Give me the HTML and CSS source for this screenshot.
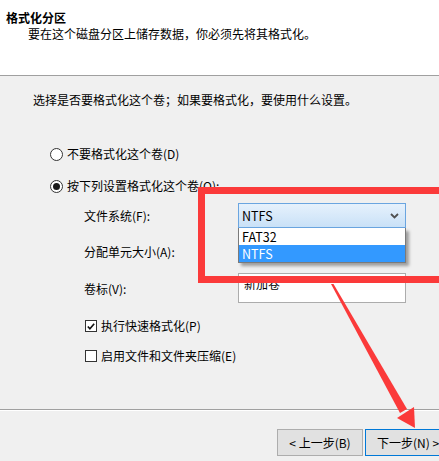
FILE: index.html
```html
<!DOCTYPE html>
<html lang="zh-CN">
<head>
<meta charset="utf-8">
<title>格式化分区</title>
<link rel="stylesheet" href="styles.css">
</head>
<body>
<div class="wizard">
  <header class="head">
    <div class="head-title">格式化分区</div>
    <div class="head-sub">要在这个磁盘分区上储存数据，你必须先将其格式化。</div>
  </header>

  <main class="content">
    <p class="intro">选择是否要格式化这个卷；如果要格式化，要使用什么设置。</p>

    <div class="options">
      <label class="radio-row r1"><span class="radio"></span>不要格式化这个卷(D)</label>
      <label class="radio-row r2"><span class="radio checked"></span>按下列设置格式化这个卷(O):</label>

      <div class="fields">
        <div class="field f1">
          <span class="field-label">文件系统(F):</span>
          <div class="combo open">
            <span class="combo-value">NTFS</span>
            <svg class="chev" width="9" height="6" viewBox="0 0 9 6"><path d="M1 1 L4.5 4.5 L8 1" fill="none" stroke="#505050" stroke-width="1.8"/></svg>
            <ul class="combo-list">
              <li>FAT32</li>
              <li class="sel">NTFS</li>
            </ul>
          </div>
        </div>
        <div class="field f2">
          <span class="field-label">分配单元大小(A):</span>
        </div>
        <div class="field f3">
          <span class="field-label">卷标(V):</span>
          <div class="textbox">新加卷</div>
        </div>
      </div>

      <label class="check-row c1"><span class="check on"><svg width="11" height="11" viewBox="0 0 11 11"><path d="M2 5.5 L4.3 8 L9 2.5" fill="none" stroke="#111" stroke-width="1.8"/></svg></span>执行快速格式化(P)</label>
      <label class="check-row c2"><span class="check"></span>启用文件和文件夹压缩(E)</label>
    </div>
  </main>

  <footer class="foot">
    <button class="btn">&lt; 上一步(B)</button>
    <button class="btn primary">下一步(N) &gt;</button>
  </footer>

  <!-- annotation: highlight frame and pointer arrow -->
  <div class="mark-box"></div>
  <svg class="mark-arrow" width="439" height="461" viewBox="0 0 439 461">
    <polygon points="331,284 333.5,284 407,409 400,413" fill="#fb3a3a"/>
    <polygon points="397,418 414,407 415,428" fill="#fb3a3a"/>
  </svg>
</div>
</body>
</html>
```

FILE: styles.css
```css
* { box-sizing: border-box; }

html, body {
  margin: 0;
  padding: 0;
}

body {
  width: 439px;
  height: 461px;
  overflow: hidden;
  background: #f0f0f0;
  font-family: "Microsoft YaHei", "Noto Sans CJK SC", sans-serif;
  font-size: 12px;
  color: #000;
}

.wizard {
  position: relative;
  width: 439px;
  height: 461px;
  overflow: hidden;
  display: flex;
  flex-direction: column;
}

/* header band */
.head {
  height: 76px;
  background: #fff;
  border-bottom: 1px solid #a0a0a0;
  padding-top: 10px;
  line-height: 16px;
}
.head-title {
  padding-left: 6px;
  font-weight: bold;
}
.head-sub {
  padding-left: 28px;
}

/* body */
.content {
  height: 333px;
  padding: 16px 0 0 33px;
}
.intro {
  margin: 0;
  line-height: 16px;
}

.options {
  display: flex;
  flex-direction: column;
}

.radio-row,
.check-row {
  display: flex;
  align-items: center;
  height: 16px;
  line-height: 16px;
}
.radio-row { padding-left: 17px; }
.r1 { margin-top: 38px; }
.r2 { margin-top: 16px; }

.radio {
  width: 13px;
  height: 13px;
  border: 1px solid #333;
  border-radius: 50%;
  background: #fff;
  margin-right: 4px;
  display: flex;
  align-items: center;
  justify-content: center;
}
.radio.checked::after {
  content: "";
  width: 7px;
  height: 7px;
  border-radius: 50%;
  background: #1a1a1a;
}

.fields {
  display: flex;
  flex-direction: column;
  margin-top: 9px;
  padding-left: 51px;
}
.field {
  display: flex;
  align-items: center;
}
.field-label { width: 154px; }
.f1 { height: 25px; }
.f2 { height: 23px; margin-top: 12px; }
.f3 { height: 30px; margin-top: 10px; }

.combo {
  position: relative;
  width: 168px;
  height: 100%;
}
.combo.open {
  border: 1px solid #6aa5e0;
  background: linear-gradient(#e6f1fc, #c9e1f7);
  display: flex;
  align-items: center;
  padding-left: 3px;
  font-size: 12.5px;
}
.chev {
  position: absolute;
  right: 6px;
  top: 9px;
}
.combo-list {
  position: absolute;
  left: -1px;
  top: 24px;
  width: 168px;
  margin: 0;
  padding: 0;
  list-style: none;
  background: #fff;
  border: 1px solid #7a7a7a;
  border-top: none;
  box-shadow: 3px 3px 3px rgba(0, 0, 0, 0.35);
  z-index: 2;
  font-size: 12.5px;
}
.combo-list li {
  height: 17px;
  line-height: 17px;
  padding-left: 3px;
}
.combo-list li.sel {
  background: #3399ff;
  color: #fff;
}

.textbox {
  width: 168px;
  height: 100%;
  border: 1px solid #acacac;
  background: #fff;
  padding: 0 0 9px 5px;
  display: flex;
  align-items: center;
}

.check-row { padding-left: 52px; }
.c1 { margin-top: 15px; }
.c2 { margin-top: 14px; }
.check {
  width: 12px;
  height: 12px;
  border: 1px solid #333;
  background: #fff;
  margin-right: 4px;
  display: flex;
  align-items: center;
  justify-content: center;
}
.check svg { display: block; }

/* footer buttons */
.foot {
  flex: 1;
  border-top: 1px solid #a0a0a0;
  box-shadow: inset 0 1px 0 #fff;
  display: flex;
  align-items: flex-start;
  padding: 19px 0 0 277px;
  gap: 2px;
}
.btn {
  flex: none;
  width: 86px;
  height: 27px;
  background: #e1e1e1;
  border: 1px solid #adadad;
  font: inherit;
  color: #000;
  padding: 0;
}
.btn.primary { border-color: #0078d7; }

/* annotation overlay */
.mark-box {
  position: absolute;
  left: 198px;
  top: 187px;
  width: 300px;
  height: 96px;
  border: 7px solid #fb3a3a;
  z-index: 3;
}
.mark-arrow {
  position: absolute;
  left: 0;
  top: 0;
  z-index: 4;
  pointer-events: none;
}
```
